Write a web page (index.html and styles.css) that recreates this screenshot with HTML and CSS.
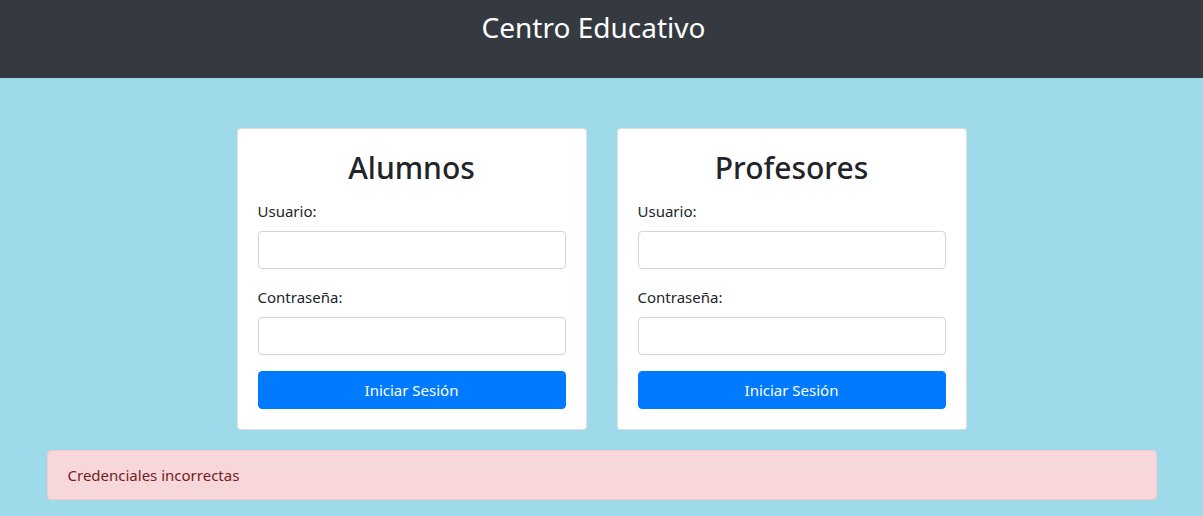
FILE: index.html
```html
<!DOCTYPE html>
<html lang="es">
<head>
<meta charset="utf-8">
<title>Centro Educativo</title>
<link rel="stylesheet" href="styles.css">
</head>
<body>
<header class="topbar">
  <h1 class="topbar-title">Centro Educativo</h1>
</header>
<main class="container">
  <div class="cards">
    <section class="card">
      <h2 class="card-title">Alumnos</h2>
      <form class="login-form">
        <div class="form-group">
          <label class="form-label">Usuario:</label>
          <input class="form-control" type="text">
        </div>
        <div class="form-group">
          <label class="form-label">Contraseña:</label>
          <input class="form-control" type="password">
        </div>
        <button class="btn-primary" type="button">Iniciar Sesión</button>
      </form>
    </section>
    <section class="card">
      <h2 class="card-title">Profesores</h2>
      <form class="login-form">
        <div class="form-group">
          <label class="form-label">Usuario:</label>
          <input class="form-control" type="text">
        </div>
        <div class="form-group">
          <label class="form-label">Contraseña:</label>
          <input class="form-control" type="password">
        </div>
        <button class="btn-primary" type="button">Iniciar Sesión</button>
      </form>
    </section>
  </div>
  <div class="alert">Credenciales incorrectas</div>
</main>
</body>
</html>
```
FILE: styles.css
```css
* { box-sizing: border-box; }
html, body { height: 100%; }
body {
  margin: 0;
  background: #9fdaea;
  font-family: "Noto Sans", "Open Sans", sans-serif;
  font-size: 16px;
  line-height: 1.5;
  color: #212529;
}
.topbar {
  background: #343a40;
  height: 78px;
  display: flex;
  justify-content: center;
  padding-top: 8px;
  padding-right: 16px;
}
.topbar-title {
  margin: 0;
  font-weight: 400;
  font-size: 28px;
  line-height: 38px;
  color: #fff;
}
.container {
  width: 1140px;
  margin: 0 auto;
  padding: 50px 15px 0;
}
.cards {
  display: flex;
  justify-content: center;
  gap: 30px;
}
.card {
  width: 350px;
  background: #fff;
  border: 1px solid rgba(0,0,0,.125);
  border-radius: 4px;
  padding: 20px;
}
.card-title {
  margin: 0 0 12px;
  text-align: center;
  font-size: 30px;
  font-weight: 500;
  line-height: 38px;
  color: #212529;
}
.form-group { margin-bottom: 16px; }
.form-label {
  display: block;
  margin-bottom: 8px;
  font-size: 15px;
  line-height: 24px;
}
.form-control {
  display: block;
  width: 100%;
  height: 38px;
  padding: 6px 12px;
  border: 1px solid #ced4da;
  border-radius: 4px;
  background: #fff;
  font: inherit;
}
.btn-primary {
  display: block;
  width: 100%;
  height: 38px;
  border: 1px solid #007bff;
  border-radius: 4px;
  background: #007bff;
  color: #fff;
  font-family: inherit;
  font-size: 15px;
  line-height: 24px;
}
.alert {
  margin-top: 20px;
  padding: 12px 20px;
  background: #f8d7da;
  border: 1px solid #f5c6cb;
  border-radius: 4px;
  color: #721c24;
  font-size: 15px;
  line-height: 24px;
}
```
